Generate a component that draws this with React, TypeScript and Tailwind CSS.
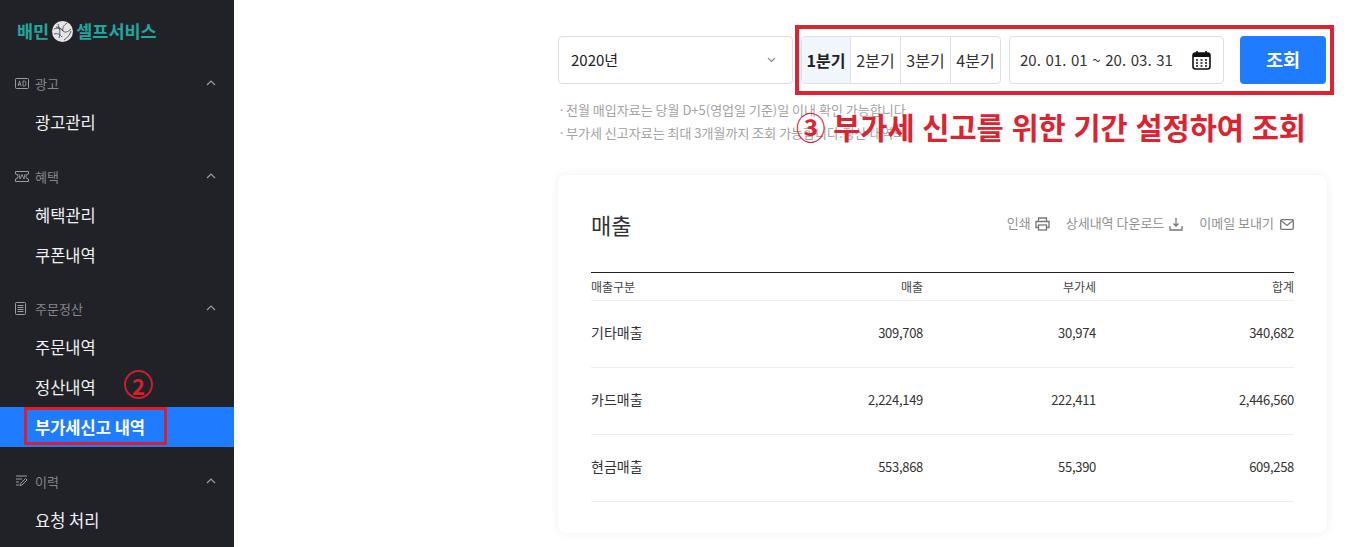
import React from "react";

const font = { fontFamily: '"Noto Sans CJK KR", "Noto Sans", sans-serif' };

function Chevron() {
  return (
    <svg width="10" height="6" viewBox="0 0 10 6" fill="none" stroke="#9a9ca1" strokeWidth="1.2" className="ml-auto mr-[18px]">
      <path d="M1 5l4-4 4 4" />
    </svg>
  );
}

function AdIcon() {
  return (
    <svg width="14" height="11" viewBox="0 0 14 11" fill="none" stroke="#9a9ca1">
      <rect x="0.5" y="0.5" width="13" height="10" rx="1" />
      <path d="M3 8l1.500-5L6 8M3.600 6.400h1.800M8 3v5h1.500a1.500 2.500 0 000-5H8z" strokeWidth="0.9" />
    </svg>
  );
}
function WonIcon() {
  return (
    <svg width="14" height="11" viewBox="0 0 14 11" fill="none" stroke="#9a9ca1">
      <path d="M0.500 0.500h13v2.500a2.500 2.500 0 000 5v2.500h-13V8a2.500 2.500 0 000-5z" />
      <path d="M4 3l1 5 2-4.500L9 8l1-5" strokeWidth="0.9" />
    </svg>
  );
}
function DocIcon() {
  return (
    <svg width="11" height="13" viewBox="0 0 11 13" fill="none" stroke="#9a9ca1">
      <rect x="0.5" y="0.5" width="10" height="12" rx="1" />
      <path d="M2.500 3.500h6M2.500 5.500h6M2.500 7.500h6M2.500 9.500h6" />
    </svg>
  );
}
function HistIcon() {
  return (
    <svg width="13" height="12" viewBox="0 0 13 12" fill="none" stroke="#9a9ca1">
      <path d="M1 1h11M1 4h6M1 7h3M1 10h3" />
      <path d="M5 10.500l.5-2L10.500 3.500l1.500 1.500-5 5z" />
    </svg>
  );
}

function Group({ icon, title, children, tight }: { icon: React.ReactNode; title: string; children: React.ReactNode; tight?: boolean }) {
  return (
    <div className={tight ? "mb-[14px]" : "mb-[15px]"}>
      <div className="flex h-[38px] items-center pl-[15px] text-[13px] text-[#85878c]">
        <span className="flex w-[20px] items-center">{icon}</span>
        <span className="mt-[1px]">{title}</span>
        <Chevron />
      </div>
      {children}
    </div>
  );
}

function Item({ children, active }: { children: React.ReactNode; active?: boolean }) {
  return (
    <div className={`relative flex h-[40px] items-center pl-[35px] text-[16.500px] ${active ? "bg-[#1f7bff] font-bold text-white" : "text-[#f2f2f2]"}`}>
      {children}
    </div>
  );
}

function Globe() {
  return (
    <svg width="21" height="21" viewBox="0 0 21 21" className="mx-[3px]">
      <circle cx="10.500" cy="10.500" r="10.500" fill="#e4e5e6" />
      <path d="M2 8c4-2 7 0 9 2s5 1 8-2M2 13c3-1 6 0 8 3M6 3c1 4 3 8 1 14M15 2c-3 2-5 5-4 8M12 19c3-2 6-5 7-9M4 6c3 0 5 1 7 4" stroke="#4a4d53" strokeWidth="0.9" fill="none" />
    </svg>
  );
}

const rows = [
  ["기타매출", "309,708", "30,974", "340,682"],
  ["카드매출", "2,224,149", "222,411", "2,446,560"],
  ["현금매출", "553,868", "55,390", "609,258"],
];

export default function App() {
  return (
    <div style={font} className="relative flex h-[547px] w-[1350px] overflow-hidden bg-white">
      <aside className="w-[234px] shrink-0 bg-[#202228]">
        <div className="flex h-[64px] items-center pb-[2px] pl-[17px] text-[17.500px] font-bold text-[#21a79f]">
          <span>배민</span>
          <Globe />
          <span>셀프서비스</span>
        </div>
        <Group icon={<AdIcon />} title="광고">
          <Item>광고관리</Item>
        </Group>
        <Group icon={<WonIcon />} title="혜택" tight>
          <Item>혜택관리</Item>
          <Item>쿠폰내역</Item>
        </Group>
        <Group icon={<DocIcon />} title="주문정산">
          <Item>주문내역</Item>
          <Item>
            정산내역
            <span className="absolute left-[124px] top-[3px] flex h-[29px] w-[29px] items-center justify-center rounded-full border-2 border-[#c9202c] text-[22px] font-bold leading-none text-[#d5202e]">2</span>
          </Item>
          <Item active>
            부가세신고 내역
            <span className="absolute left-[24px] top-0 h-[38px] w-[143px] border-[3px] border-[#d9202f]" />
          </Item>
        </Group>
        <Group icon={<HistIcon />} title="이력">
          <Item>요청 처리</Item>
        </Group>
      </aside>

      <main className="relative flex-1 pl-[324px] pr-[24px] pt-[36px]">
        <div className="flex h-[48px] items-stretch">
          <div className="flex w-[235px] items-center justify-between rounded-[4px] border border-[#dcdfe3] pl-[12px] pr-[16px] text-[15px] text-[#222]">
            <span className="mt-[1px]">2020년</span>
            <svg width="9" height="6" viewBox="0 0 9 6" fill="none" stroke="#8a8d91" strokeWidth="1.2"><path d="M1 1l3.500 3.500L8 1" /></svg>
          </div>
          <div className="ml-[8px] flex w-[200px] rounded-[4px] border border-[#dcdfe3] text-[16px] text-[#333]">
            <div className="flex w-[48px] items-center justify-center rounded-l-[4px] bg-[#f1f6fd] font-bold text-[#222]">1분기</div>
            <div className="flex w-[50px] items-center justify-center border-l border-[#dcdfe3]">2분기</div>
            <div className="flex w-[50px] items-center justify-center border-l border-[#dcdfe3]">3분기</div>
            <div className="flex w-[50px] items-center justify-center border-l border-[#dcdfe3]">4분기</div>
          </div>
          <div className="ml-[8px] flex w-[215px] items-center justify-between rounded-[4px] border border-[#dcdfe3] pl-[10px] pr-[12px] text-[15px] text-[#333]">
            <span className="[word-spacing:1.3px]">20. 01. 01 ~ 20. 03. 31</span>
            <svg width="19" height="20" viewBox="0 0 19 20" fill="none">
              <rect x="1" y="3" width="17" height="16" rx="2.500" stroke="#111" strokeWidth="1.600" />
              <rect x="1" y="3" width="17" height="4" fill="#111" />
              <path d="M5 1v3M14 1v3" stroke="#111" strokeWidth="1.600" />
              <path d="M4 10h2M8.500 10h2M13 10h2M4 13h2M8.500 13h2M13 13h2M4 16h2M8.500 16h2M13 16h2" stroke="#111" strokeWidth="1.500" />
            </svg>
          </div>
          <div className="ml-[16px] flex w-[86px] items-center justify-center rounded-[4px] bg-[#1f7bff] text-[18.500px] font-bold text-white">조회</div>
        </div>

        <div className="mt-[14px] text-[13px] leading-[23px] text-[#a3a3a3]">
          <div className="flex"><span className="w-[8px]">·</span>전월 매입자료는 당월 D+5(영업일 기준)일 이내 확인 가능합니다</div>
          <div className="flex"><span className="w-[8px]">·</span>부가세 신고자료는 최대 3개월까지 조회 가능합니다.정산 내역의</div>
        </div>

        <section className="mt-[31px] h-[358px] rounded-[8px] px-[33px] pt-[33px] shadow-[0_0_10px_rgba(0,0,0,0.07)]">
          <div className="flex h-[32px] items-center justify-between">
            <h2 className="text-[22px] font-normal text-[#333]">매출</h2>
            <div className="flex items-center text-[13px] text-[#919191]">
              <span className="-mt-[3px]">인쇄</span>
              <svg width="15" height="14" viewBox="0 0 15 14" fill="none" stroke="#777" strokeWidth="1.300" className="ml-[4px]">
                <path d="M3.500 4V1h8v3M3.500 10.500H1V4.500h13v6h-2.500" />
                <rect x="3.500" y="8" width="8" height="5" />
              </svg>
              <span className="-mt-[3px] ml-[16px]">상세내역 다운로드</span>
              <svg width="14" height="14" viewBox="0 0 14 14" fill="none" stroke="#777" strokeWidth="1.300" className="ml-[5px]">
                <path d="M7 1v8M4.500 6.500L7 9l2.500-2.500M1 9v4h12V9" />
              </svg>
              <span className="-mt-[3px] ml-[16px]">이메일 보내기</span>
              <svg width="14" height="11" viewBox="0 0 14 11" fill="none" stroke="#777" strokeWidth="1.300" className="ml-[6px]">
                <rect x="0.700" y="0.700" width="12.600" height="9.600" rx="1" />
                <path d="M1 1.500L7 6.500l6-5" />
              </svg>
            </div>
          </div>

          <div className="mt-[32px] border-t border-[#222]">
            <div className="grid h-[28px] grid-cols-[160px_172px_173px_198px] items-center border-b border-[#eee] text-[12px] text-[#444]">
              <div>매출구분</div>
              <div className="text-right">매출</div>
              <div className="text-right">부가세</div>
              <div className="text-right">합계</div>
            </div>
            {rows.map((r) => (
              <div key={r[0]} className="grid h-[67px] grid-cols-[160px_172px_173px_198px] items-center border-b border-[#eee] pb-[3px] text-[13px] tracking-[-0.3px] text-[#333]">
                <div className="text-[14px] tracking-normal">{r[0]}</div>
                <div className="text-right">{r[1]}</div>
                <div className="text-right">{r[2]}</div>
                <div className="text-right">{r[3]}</div>
              </div>
            ))}
          </div>
        </section>
      </main>

      <div className="absolute left-[795px] top-[25px] h-[70px] w-[539px] border-[4px] border-[#dd2230]" />
      <div className="absolute left-[796px] top-[106px] whitespace-nowrap text-[29.500px] font-bold leading-[40px] text-[#dd2230] [word-spacing:1px]">③ 부가세 신고를 위한 기간 설정하여 조회</div>
    </div>
  );
}
